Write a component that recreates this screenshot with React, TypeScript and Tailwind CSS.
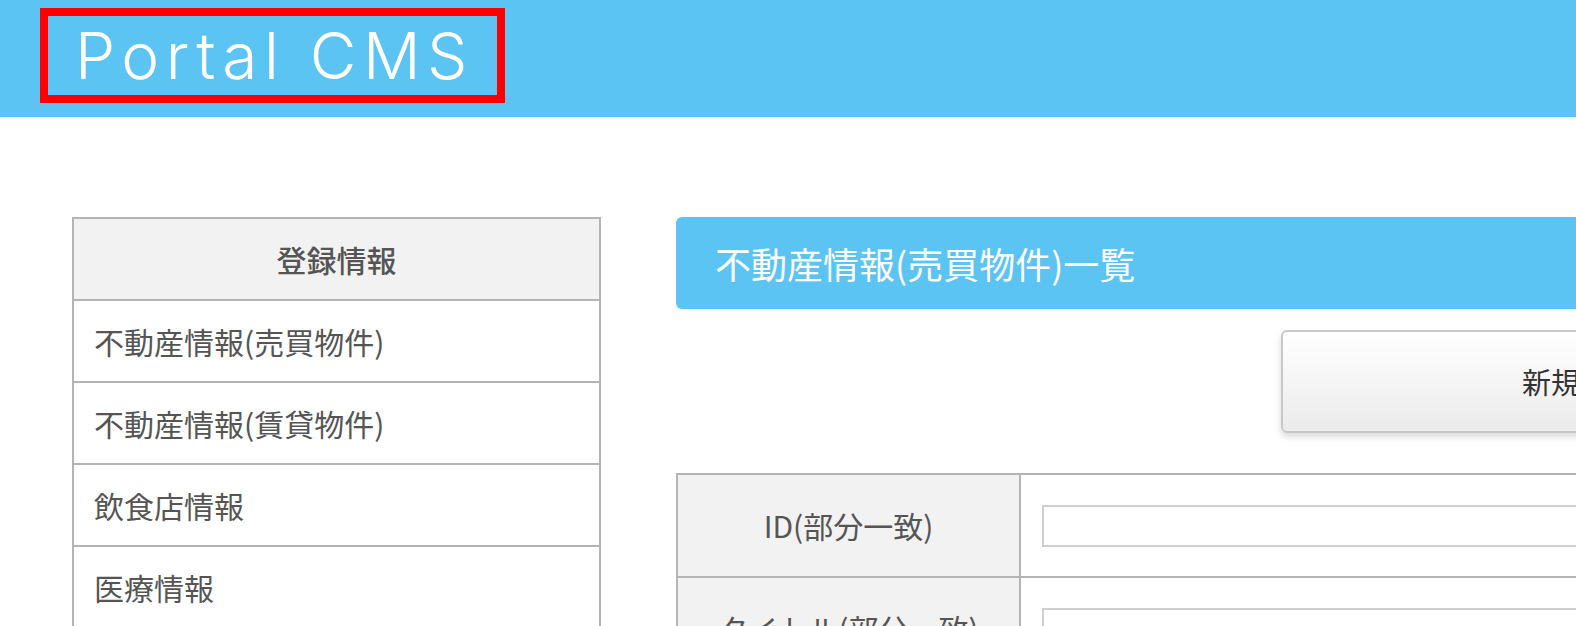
import React from 'react';

const menuItems = ['不動産情報(売買物件)', '不動産情報(賃貸物件)', '飲食店情報', '医療情報', '求人情報'];

const searchRows = ['ID(部分一致)', 'タイトル(部分一致)', 'ステータス'];

function Header() {
  return (
    <header className="h-[117px] w-full bg-[#5bc4f2]">
      <div className="pl-[40px] pt-[8px]">
        <div className="flex h-[95px] w-[465px] items-center justify-center border-[8px] border-[#ff0000]">
          <span className="pl-[4px] font-['Inter','Helvetica_Neue',sans-serif] text-[64px] font-light leading-none tracking-[6.5px] text-white">
            Portal CMS
          </span>
        </div>
      </div>
    </header>
  );
}

function Sidebar() {
  return (
    <aside className="w-[529px] shrink-0 self-start border-2 border-[#b4b4b4]">
      <div className="flex h-[82px] items-center justify-center border-b-2 border-[#b4b4b4] bg-[#f2f2f2] text-[30px] font-medium text-[#555]">
        登録情報
      </div>
      {menuItems.map((item) => (
        <div
          key={item}
          className="flex h-[82px] items-center border-b-2 border-[#b4b4b4] pl-[20px] text-[30px] text-[#555] last:border-b-0"
        >
          {item}
        </div>
      ))}
    </aside>
  );
}

function MainPanel() {
  return (
    <main className="w-[1203px] shrink-0">
      {/* Page title */}
      <div className="flex h-[92px] items-center rounded-[6px] bg-[#5bc4f2] pl-[39px] text-[36px] text-white">
        不動産情報(売買物件)一覧
      </div>

      {/* New button */}
      <div className="mt-[21px] flex justify-end">
        <button className="flex h-[103px] w-[598px] items-center justify-center rounded-[6px] border-2 border-[#c8c8c8] bg-gradient-to-b from-white to-[#ebebeb] text-[29px] text-[#333] shadow-[0_4px_6px_rgba(0,0,0,0.15)]">
          新規登録
        </button>
      </div>

      {/* Search form */}
      <table className="mt-[40px] w-full border-collapse">
        <tbody>
          {searchRows.map((label) => (
            <tr key={label} className="h-[103px]">
              <th className="w-[343px] border-2 border-[#b4b4b4] bg-[#f2f2f2] text-center text-[30px] font-normal text-[#555]">
                {label}
              </th>
              <td className="border-2 border-[#b4b4b4] px-[21px]">
                <input
                  type="text"
                  className="block h-[42px] w-full border-2 border-[#cfcfcf] bg-white px-2 text-[24px] outline-none"
                />
              </td>
            </tr>
          ))}
        </tbody>
      </table>
    </main>
  );
}

export default function App() {
  return (
    <div className="h-[626px] w-screen overflow-hidden bg-white font-['Noto_Sans_CJK_JP',sans-serif]">
      <Header />
      <div className="mt-[100px] flex w-[1960px] gap-[75px] pl-[72px]">
        <Sidebar />
        <MainPanel />
      </div>
    </div>
  );
}
